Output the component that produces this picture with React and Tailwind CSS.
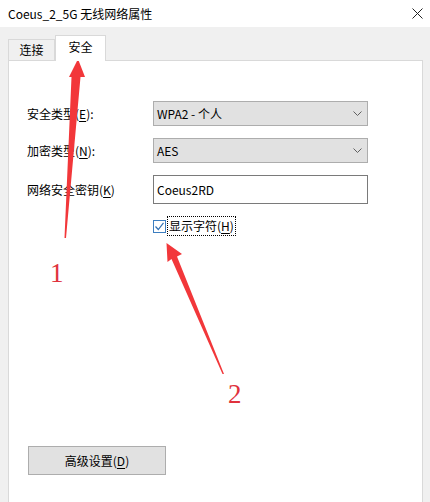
import React from "react";

const ui = { fontFamily: '"Noto Sans CJK SC", "Noto Sans", sans-serif' };

function Chevron() {
  return (
    <svg width="9" height="5" viewBox="0 0 9 5" className="mr-[5px]">
      <path d="M0.5 0.5 L4.5 4.5 L8.5 0.5" fill="none" stroke="#606060" strokeWidth="1" />
    </svg>
  );
}

function Select({ value }) {
  return (
    <div className="flex h-[25px] w-[215px] items-center justify-between border border-[#adadad] bg-[#e1e1e1] pl-[3px]">
      <span className="text-[12px] leading-none text-black">{value}</span>
      <Chevron />
    </div>
  );
}

function Label({ text, mnemonic, suffix = "" }) {
  return (
    <span className="w-[126px] shrink-0 text-[12px] leading-none text-black">
      {text}(<span className="underline underline-offset-2">{mnemonic}</span>){suffix}
    </span>
  );
}

// red arrows + numbers drawn on top of the dialog
function Annotations() {
  return (
    <svg className="pointer-events-none absolute left-0 top-0" width="430" height="502" viewBox="0 0 430 502">
      <path d="M78 59 L85 77 L80.5 77 L66 238 L64.5 238 L71.5 77 L69 77 Z" fill="#f2373a" />
      <path d="M166.5 243 L182 254 L177 256.5 L224 374 L222.5 374 L171.5 259 L167.5 262 Z" fill="#f2373a" />
      <text x="50" y="282" fill="#e0323c" fontSize="27" fontFamily='"Liberation Serif", serif'>1</text>
      <text x="228" y="403" fill="#e0323c" fontSize="27" fontFamily='"Liberation Serif", serif'>2</text>
    </svg>
  );
}

export default function App() {
  return (
    <div className="relative h-[502px] w-[430px] overflow-hidden bg-[#f0f0f0]" style={ui}>
      {/* title bar */}
      <div className="flex h-[27px] items-center justify-between bg-white pl-[8px] pr-[7px]">
        <span className="text-[12px] leading-none text-black">Coeus_2_5G 无线网络属性</span>
        <svg width="11" height="11" viewBox="0 0 11 11">
          <path d="M0.5 0.5 L10.5 10.5 M10.5 0.5 L0.5 10.5" stroke="#222" strokeWidth="1" />
        </svg>
      </div>

      {/* tabs */}
      <div className="ml-[8px] mt-[8px] flex items-end">
        <div className="flex h-[21px] w-[47px] items-center justify-center border border-b-0 border-[#d9d9d9] bg-[#f0f0f0] text-[12px] leading-none text-black">
          连接
        </div>
        <div className="relative z-10 -mb-px flex h-[26px] w-[51px] items-start justify-center border border-b-0 border-[#d9d9d9] bg-white pt-[5px] text-[12px] leading-none text-black">
          安全
        </div>
      </div>

      {/* panel */}
      <div className="ml-[8px] mr-[7px] h-[460px] border border-[#d9d9d9] bg-white pl-[18px] pt-[40px]">
        <div className="flex flex-col gap-[12px]">
          <div className="flex items-center">
            <Label text="安全类型" mnemonic="E" suffix=":" />
            <Select value="WPA2 - 个人" />
          </div>
          <div className="flex items-center">
            <Label text="加密类型" mnemonic="N" suffix=":" />
            <Select value="AES" />
          </div>
          <div className="flex items-center">
            <Label text="网络安全密钥" mnemonic="K" />
            <div className="flex h-[29px] w-[215px] items-center border border-[#7a7a7a] bg-white pl-[3px] text-[12px] leading-none text-black">
              Coeus2RD
            </div>
          </div>
        </div>

        <div className="ml-[126px] mt-[12px] flex h-[20px] items-center">
          <div className="flex h-[13px] w-[13px] items-center justify-center border border-[#3c7ec0] bg-white">
            <svg width="11" height="11" viewBox="0 0 11 11">
              <path d="M1.5 5.5 L4.3 8.5 L9.5 1.8" fill="none" stroke="#2f6fb3" strokeWidth="1.2" />
            </svg>
          </div>
          <span className="ml-[1px] flex h-[20px] items-center border border-dotted border-black px-[1px] text-[12px] leading-none text-black">
            显示字符(<span className="underline underline-offset-2">H</span>)
          </span>
        </div>

        <button className="ml-[1px] mt-[210px] flex h-[29px] w-[138px] items-center justify-center border border-[#adadad] bg-[#e1e1e1] text-[12px] leading-none text-black">
          高级设置(<span className="underline underline-offset-2">D</span>)
        </button>
      </div>

      <Annotations />
    </div>
  );
}
